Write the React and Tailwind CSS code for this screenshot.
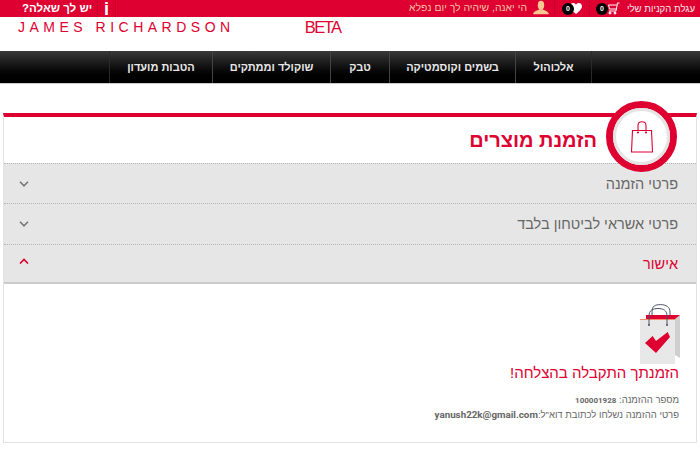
export default function App() {
  const Badge = () => (
    <span className="w-[12px] h-[12px] rounded-full bg-black text-white text-[7px] font-bold flex items-center justify-center leading-none">0</span>
  );
  const NavItem = ({ t, w, b }) => (
    <div className={`${w} h-full flex items-center justify-center text-[11px] font-bold text-[#e8e8e8] border-l ${b || "border-[#444]"}`}>{t}</div>
  );
  const Row = ({ t, open, h }) => (
    <div className={`${h} flex items-center justify-between pr-[18px] pl-[15px] border-t border-dotted border-[#b5b5b5] bg-[#e6e6e6] ${open ? "text-[#dd0031]" : "text-[#666]"}`}>
      <span className="text-[14.5px] leading-none mt-[1px]">{t}</span>
      <svg width="10" height="6" viewBox="0 0 10 6" fill="none" stroke={open ? "#dd0031" : "#777"} strokeWidth="1.6" className={open ? "-mt-[5px]" : ""}>
        {open ? <path d="M1 5.5 L5 1.5 L9 5.5" /> : <path d="M1 .8 L5 4.8 L9 .8" />}
      </svg>
    </div>
  );
  return (
    <div dir="rtl" className="w-[700px] h-[476px] bg-white overflow-hidden font-['Liberation_Sans',sans-serif]">
      <div className="h-[17px] bg-[#dd0031] flex items-center text-white">
        <div className="w-[111px] h-full flex items-center border-l border-[#c40029] pr-[5px]">
          <span className="w-[68px] text-[9.6px] leading-none text-[#ffe9ec] whitespace-nowrap">עגלת הקניות שלי</span>
          <svg width="13" height="13" viewBox="0 0 13 13" fill="none" stroke="#fff" strokeWidth="1" className="mr-[7px] shrink-0">
            <path d="M12.5 1 H10.5 L9 9 H2 M9.8 3 H1.5 L2.5 7 H9.2" />
            <circle cx="3" cy="11" r="1" fill="#fff" />
            <circle cx="8" cy="11" r="1" fill="#fff" />
          </svg>
          <span className="-mr-[1px] shrink-0"><Badge /></span>
        </div>
        <div className="w-[35px] h-full flex items-center pr-[7px] border-l border-[#c40029]">
          <svg width="12" height="11" viewBox="0 0 24 22" fill="#fff" className="shrink-0">
            <path d="M12 22 C4 15 0 11 0 6.5 C0 3 2.7 0 6.2 0 C8.6 0 10.8 1.3 12 3.4 C13.2 1.3 15.4 0 17.8 0 C21.3 0 24 3 24 6.5 C24 11 20 15 12 22Z" />
          </svg>
          <span className="-mr-[4px] shrink-0"><Badge /></span>
        </div>
        <div className="h-full flex items-center gap-[6px] pr-[5px]">
          <svg width="16" height="15" viewBox="0 0 18 15" fill="#f9c892" className="-mt-[2px]">
            <ellipse cx="9" cy="5" rx="3.6" ry="5" />
            <path d="M0 15 C1 11.5 5 11 7 9.5 H11 C13 11 17 11.5 18 15Z" />
          </svg>
          <span className="text-[10.4px] leading-none text-[#f9c4a8]">הי יאנה, שיהיה לך יום נפלא</span>
        </div>
        <div className="mr-auto h-full flex items-center">
          <div className="h-full w-[19px] flex items-center justify-center border-x border-[#c40029] text-[18px] font-bold leading-none">i</div>
          <span className="text-[11.5px] font-bold leading-none pr-[5px] pl-[22px]">יש לך שאלה?</span>
        </div>
      </div>

      <div dir="ltr" className="h-[34px] flex items-start text-[#dd0031]">
        <span className="ml-[18px] mt-[3px] text-[14px] leading-[15px] tracking-[4.5px] whitespace-nowrap">JAMES RICHARDSON</span>
        <span className="ml-[70px] mt-[1px] text-[16.5px] leading-[18px] tracking-[-1.5px]">BETA</span>
      </div>

      <div className="h-[33px] bg-gradient-to-b from-[#3a3a3a] via-[#111] to-[#000] flex border-b border-[#ccc]">
        <div className="w-[109px] h-full border-l border-[#2a2a2a]" />
        <NavItem t="אלכוהול" w="w-[76px]" />
        <NavItem t="בשמים וקוסמטיקה" w="w-[126px]" />
        <NavItem t="טבק" w="w-[59px]" />
        <NavItem t="שוקולד וממתקים" w="w-[118px]" />
        <NavItem t="הטבות מועדון" w="w-[103px]" b="border-[#2a2a2a]" />
      </div>

      <div className="relative mt-[29px] mx-[3px] border-x border-b border-[#e2e2e2] border-t-4 border-t-[#dd0031]">
        <div className="h-[46px] flex items-center pr-[99px] text-[20px] font-bold text-[#dd0031] whitespace-nowrap">הזמנת מוצרים</div>
        <div className="absolute -top-[16px] right-[19px] w-[71px] h-[71px] rounded-full border-[7px] border-[#dd0031] bg-white flex items-center justify-center">
          <div className="absolute inset-0 rounded-full border-[3px] border-[#e4e4e4]" />
          <svg width="22" height="32" viewBox="0 0 22 32" fill="none" stroke="#dd0031" strokeWidth="1.1">
            <path d="M1.5 9.5 H20.5 L21.5 31 H.5 Z" />
            <path d="M7 9.5 V4.5 C7 2 8.7 .7 11 .7 C13.3 .7 15 2 15 4.5 V9.5" />
            <circle cx="7" cy="11.5" r=".5" fill="#dd0031" />
            <circle cx="15" cy="11.5" r=".5" fill="#dd0031" />
          </svg>
        </div>
        <Row t="פרטי הזמנה" h="h-[40px]" />
        <Row t="פרטי אשראי לביטחון בלבד" h="h-[41px]" />
        <div className="border-b-2 border-[#ccc]"><Row t="אישור" open h="h-[38px]" /></div>
        <div className="h-[158px] flex flex-col items-start pr-[17px] pt-[20px]">
          <svg width="40" height="60" viewBox="0 0 40 60" className="-mr-[1px]">
            <path d="M6 11 H40 V15 H6Z" fill="#dd0031" />
            <path d="M35 15 L40 11 V54 L35 51 Z" fill="#cfcfcf" />
            <path d="M12 11 V8 C12 2 15 .6 20.5 .6 C26 .6 30 3 30 8 V11" fill="none" stroke="#4a5568" strokeWidth="1" />
            <path d="M0 15 H35 V60 H0 Z" fill="#e8e8e8" />
            <path d="M0 15 H35 V16 H0 Z" fill="#f58a6e" />
            <path d="M9 21 V12 C9 6.5 12.5 4.5 18 4.5 C23.5 4.5 27 6.5 27 12 V21" fill="none" stroke="#4a5568" strokeWidth="1" />
            <circle cx="9" cy="21" r="1" fill="#4a5568" />
            <circle cx="27" cy="21" r="1" fill="#4a5568" />
            <path d="M5 39 L12.7 32 L16 37 L27.7 28 L30 33 L16 49 Z" fill="#dd0031" />
          </svg>
          <div className="-mt-[1px] text-[15px] leading-[20px] text-[#dd0031] whitespace-nowrap">הזמנתך התקבלה בהצלחה!</div>
          <div className="mt-[10px] text-[9.5px] leading-[14px] text-[#666] whitespace-nowrap">מספר ההזמנה: <b className="font-['Roboto'] text-[8px]">100001928</b></div>
          <div className="text-[9.5px] leading-[14px] text-[#666] whitespace-nowrap">פרטי ההזמנה נשלחו לכתובת דוא"ל:<b className="font-['Roboto'] text-[9.8px]">yanush22k@gmail.com</b></div>
        </div>
      </div>
    </div>
  );
}
